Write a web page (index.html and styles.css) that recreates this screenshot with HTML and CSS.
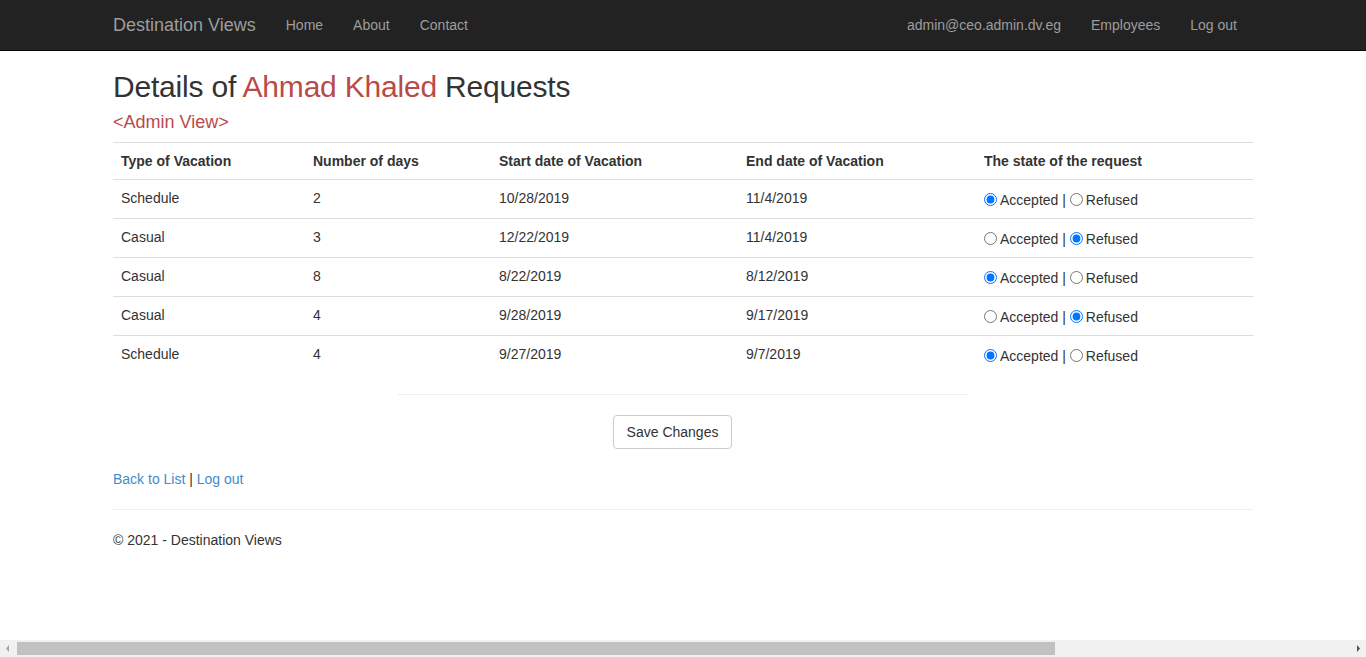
FILE: index.html
```html
<!DOCTYPE html>
<html>
<head>
<meta charset="utf-8">
<title>Details - Destination Views</title>
<link rel="stylesheet" href="styles.css">
</head>
<body>
<div class="navbar">
  <div class="container nav-inner">
    <a class="brand" href="#">Destination Views</a>
    <ul class="nav">
      <li><a href="#">Home</a></li>
      <li><a href="#">About</a></li>
      <li><a href="#">Contact</a></li>
    </ul>
    <ul class="nav nav-right">
      <li><a href="#">admin@ceo.admin.dv.eg</a></li>
      <li><a href="#">Employees</a></li>
      <li><a href="#">Log out</a></li>
    </ul>
  </div>
</div>
<div class="container body-content">
  <h2 class="title">Details of <span class="danger">Ahmad Khaled</span> Requests</h2>
  <h4 class="subtitle danger">&lt;Admin View&gt;</h4>
  <table class="table">
    <tr>
      <th class="c1">Type of Vacation</th>
      <th class="c2">Number of days</th>
      <th class="c3">Start date of Vacation</th>
      <th class="c4">End date of Vacation</th>
      <th class="c5">The state of the request</th>
    </tr>
    <tr>
      <td>Schedule</td><td>2</td><td>10/28/2019</td><td>11/4/2019</td>
      <td class="state"><input type="radio" name="r1" checked>Accepted | <input type="radio" name="r1">Refused</td>
    </tr>
    <tr>
      <td>Casual</td><td>3</td><td>12/22/2019</td><td>11/4/2019</td>
      <td class="state"><input type="radio" name="r2">Accepted | <input type="radio" name="r2" checked>Refused</td>
    </tr>
    <tr>
      <td>Casual</td><td>8</td><td>8/22/2019</td><td>8/12/2019</td>
      <td class="state"><input type="radio" name="r3" checked>Accepted | <input type="radio" name="r3">Refused</td>
    </tr>
    <tr>
      <td>Casual</td><td>4</td><td>9/28/2019</td><td>9/17/2019</td>
      <td class="state"><input type="radio" name="r4">Accepted | <input type="radio" name="r4" checked>Refused</td>
    </tr>
    <tr>
      <td>Schedule</td><td>4</td><td>9/27/2019</td><td>9/7/2019</td>
      <td class="state"><input type="radio" name="r5" checked>Accepted | <input type="radio" name="r5">Refused</td>
    </tr>
  </table>
  <hr class="half">
  <div class="actions"><button class="btn" type="button">Save Changes</button></div>
  <p class="links"><a href="#">Back to List</a> | <a href="#">Log out</a></p>
  <hr class="footer-rule">
  <footer><p>&copy; 2021 - Destination Views</p></footer>
</div>
<div class="hscroll" aria-hidden="true">
  <span class="arrow"><svg width="17" height="17" viewBox="0 0 17 17"><polygon points="9,5 6,8.5 9,12" fill="#a3a3a3"/></svg></span>
  <div class="track"><div class="thumb"></div></div>
  <span class="arrow"><svg width="17" height="17" viewBox="0 0 17 17"><polygon points="8,5 11,8.5 8,12" fill="#505050"/></svg></span>
</div>
</body>
</html>
```
FILE: styles.css
```css
* { box-sizing: border-box; }
html, body { margin: 0; padding: 0; }
body {
  font-family: "Liberation Sans", Arial, sans-serif;
  font-size: 14px;
  line-height: 1.42857143;
  color: #333;
  background: #fff;
}
a { color: #428bca; text-decoration: none; }
.container {
  width: 1170px;
  margin: 0 auto;
  padding: 0 15px;
}
.navbar {
  background: #222;
  border-bottom: 1px solid #080808;
  height: 51px;
}
.nav-inner {
  display: flex;
  align-items: flex-start;
}
.brand {
  color: #9d9d9d;
  font-size: 18px;
  line-height: 20px;
  padding: 15px 15px;
  margin-left: -15px;
  height: 50px;
}
.nav {
  list-style: none;
  margin: 0;
  padding: 0;
  display: flex;
}
.nav a {
  display: block;
  color: #9d9d9d;
  padding: 15px 15px;
  line-height: 20px;
}
.nav-right { margin-left: auto; margin-right: 1px; }
.title {
  font-size: 30px;
  font-weight: 500;
  line-height: 1.1;
  letter-spacing: -0.2px;
  margin: 19px 0 10px;
}
.danger { color: #b94a48; }
.subtitle {
  font-size: 18px;
  font-weight: 500;
  line-height: 1.1;
  margin: 10px 0 9px;
}
.table {
  width: 100%;
  border-collapse: collapse;
  border-spacing: 0;
  margin-bottom: 20px;
}
.table th, .table td {
  padding: 8px;
  text-align: left;
  vertical-align: top;
  border-top: 1px solid #ddd;
  line-height: 20px;
}
.table th { font-weight: bold; }
.table td { height: 39px; }
.table td.state { padding-top: 9px; padding-bottom: 7px; }
.c1 { width: 192px; }
.c2 { width: 186px; }
.c3 { width: 247px; }
.c4 { width: 238px; }
.c5 { width: 277px; }
.table input[type=radio] {
  margin: 4px 3px 0 0;
  width: 13px;
  height: 13px;
  vertical-align: -1px;
}
hr {
  border: 0;
  border-top: 1px solid #eee;
  margin: 20px 0;
  height: 0;
}
.half {
  width: 570px;
  margin: 0 auto 20px;
}
.actions {
  display: flex;
  justify-content: center;
  padding-right: 21px;
}
.btn {
  font-family: inherit;
  font-size: 14px;
  line-height: 20px;
  color: #333;
  background: #fff;
  border: 1px solid #ccc;
  border-radius: 4px;
  padding: 6px 12px;
  width: 119px;
  height: 34px;
}
.links { margin: 20px 0 0; }
.footer-rule { margin: 20px 0; }
footer p { margin: 0 0 10px; }
.hscroll {
  position: fixed;
  left: 0;
  right: 0;
  bottom: 0;
  height: 17px;
  background: #f1f1f1;
  display: flex;
}
.arrow { width: 17px; height: 17px; display: block; flex: none; }
.arrow svg { display: block; }
.track {
  flex: 1;
  padding: 2px 0;
}
.thumb {
  width: 1038px;
  height: 13px;
  background: #c1c1c1;
}
```
